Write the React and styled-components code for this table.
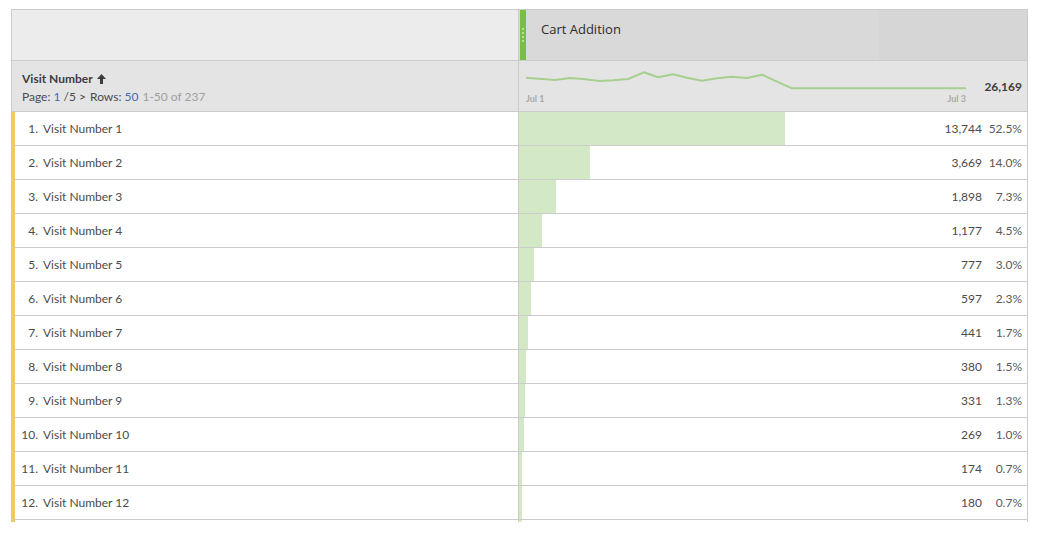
import React from "react";
import styled, { createGlobalStyle } from "styled-components";

const GlobalStyle = createGlobalStyle`
  body {
    margin: 0;
    background: #fff;
    font-family: Lato, "Open Sans", sans-serif;
    color: #4b4b4b;
  }
`;

const rows = [
  { n: 1, value: 13744, pct: "52.5%" },
  { n: 2, value: 3669, pct: "14.0%" },
  { n: 3, value: 1898, pct: "7.3%" },
  { n: 4, value: 1177, pct: "4.5%" },
  { n: 5, value: 777, pct: "3.0%" },
  { n: 6, value: 597, pct: "2.3%" },
  { n: 7, value: 441, pct: "1.7%" },
  { n: 8, value: 380, pct: "1.5%" },
  { n: 9, value: 331, pct: "1.3%" },
  { n: 10, value: 269, pct: "1.0%" },
  { n: 11, value: 174, pct: "0.7%" },
  { n: 12, value: 180, pct: "0.7%" },
];

// sparkline points, relative to the chart box
const spark = [
  [0, 7.7], [29, 10], [44, 8], [57, 9], [74, 11], [87, 10.3], [102, 9],
  [118, 2.3], [132, 7.3], [147, 4.3], [161, 7.7], [176, 10.7], [191, 8.3],
  [206, 6.7], [221, 8], [236, 4.7], [251, 11.7], [266, 18.3], [440, 18.3],
];

const Page = styled.div`
  padding: 9px 0 0 11px;
  height: 513px;
  overflow: hidden;
`;

const Table = styled.div`
  width: 1017px;
  height: 513px;
  box-sizing: border-box;
  border: 1px solid #cbcbcb;
  border-bottom: none;
  overflow: hidden;
`;

const Row = styled.div`
  display: grid;
  grid-template-columns: 507px 1fr;
  height: ${(p) => p.h}px;
  border-bottom: 1px solid #cbcbcb;
  background: ${(p) => p.bg || "#fff"};
  box-sizing: content-box;
`;

const DataRow = styled(Row)`
  margin-left: -1px;
  border-left: 4px solid #f0ca5c;
  grid-template-columns: 504px 1fr;
`;

const LeftHead = styled.div`
  background: #ececec;
  border-right: 1px solid #cbcbcb;
`;

const ColHead = styled.div`
  display: flex;
  align-items: center;
  background: linear-gradient(90deg, #d9d9d9 0 360px, #d6d6d6 360px);
`;

const Handle = styled.div`
  width: 6px;
  align-self: stretch;
  background: #79bf45;
  display: flex;
  flex-direction: column;
  align-items: center;
  justify-content: center;
  gap: 2px;
  margin: 0 15px 0 1px;

  span {
    width: 2px;
    height: 2px;
    border-radius: 50%;
    background: #c6e6ad;
  }
`;

const ColTitle = styled.div`
  font-family: "Open Sans", sans-serif;
  font-size: 13px;
  color: #2c2c2c;
  margin-top: -12px;
`;

const DimCell = styled.div`
  border-right: 1px solid #cbcbcb;
  padding: 10px 0 0 10px;
  display: flex;
  flex-direction: column;
  gap: 3px;
`;

const DimTitle = styled.div`
  font-size: 12px;
  font-weight: 700;
  color: #3d3d3d;
  display: flex;
  align-items: center;
  gap: 4px;
`;

const Pager = styled.div`
  font-size: 12px;
  color: #4b4b4b;
  display: flex;
  gap: 4px;
  align-items: center;
`;

const Link = styled.span`
  color: #4a68b4;
`;

const Muted = styled.span`
  color: #a0a0a0;
`;

const SummaryCell = styled.div`
  display: flex;
  align-items: flex-start;
`;

const Chart = styled.div`
  width: 440px;
  padding: 9px 0 0 7px;
  display: flex;
  flex-direction: column;
  gap: 1px;
`;

const Axis = styled.div`
  display: flex;
  justify-content: space-between;
  width: 440px;
  font-size: 9px;
  color: #a8a8a8;
  font-weight: 700;
`;

const Total = styled.div`
  flex: 1;
  text-align: right;
  padding: 18px 5px 0 0;
  font-size: 12px;
  font-weight: 700;
  color: #3d3d3d;
`;

const NameCell = styled.div`
  display: flex;
  align-items: center;
  font-size: 12px;
  color: #4b4b4b;
  border-right: 1px solid #cbcbcb;
`;

const Index = styled.span`
  width: 23px;
  text-align: right;
  margin-right: 5px;
`;

const MetricCell = styled.div`
  display: flex;
  align-items: center;
  font-size: 12px;
  color: #4b4b4b;
`;

const Bar = styled.div`
  align-self: stretch;
  background: #d3e8c5;
  flex-shrink: 0;
`;

const Value = styled.span`
  margin-left: auto;
`;

const Pct = styled.span`
  width: 40px;
  padding-right: 5px;
  text-align: right;
  color: #5a5a5a;
`;

function UpArrow() {
  return (
    <svg width="9" height="10" viewBox="0 0 9 10">
      <path d="M4.5 0 L9 5 H6 V10 H3 V5 H0 Z" fill="#3d3d3d" />
    </svg>
  );
}

function Sparkline() {
  const d = spark.map(([x, y], i) => `${i ? "L" : "M"}${x} ${y}`).join(" ");
  return (
    <svg width="440" height="22" viewBox="0 0 440 22">
      <path d={d} fill="none" stroke="#a7d08f" strokeWidth="2" strokeLinejoin="round" />
    </svg>
  );
}

export default function App() {
  const max = rows[0].value;
  return (
    <Page>
      <GlobalStyle />
      <Table>
        <Row h={50}>
          <LeftHead />
          <ColHead>
            <Handle>
              <span />
              <span />
              <span />
              <span />
            </Handle>
            <ColTitle>Cart Addition</ColTitle>
          </ColHead>
        </Row>
        <Row h={50} bg="#e4e4e4">
          <DimCell>
            <DimTitle>
              Visit Number <UpArrow />
            </DimTitle>
            <Pager>
              <span>
                Page: <Link>1</Link> /5 &gt;
              </span>
              <span>
                Rows: <Link>50</Link>
              </span>
              <Muted>1-50 of 237</Muted>
            </Pager>
          </DimCell>
          <SummaryCell>
            <Chart>
              <Sparkline />
              <Axis>
                <span>Jul 1</span>
                <span>Jul 3</span>
              </Axis>
            </Chart>
            <Total>26,169</Total>
          </SummaryCell>
        </Row>
        {rows.map((r) => (
          <DataRow key={r.n} h={33}>
            <NameCell>
              <Index>{r.n}.</Index>
              Visit Number {r.n}
            </NameCell>
            <MetricCell>
              <Bar style={{ width: Math.max(3, Math.round((r.value / max) * 266)) }} />
              <Value>{r.value.toLocaleString("en-US")}</Value>
              <Pct>{r.pct}</Pct>
            </MetricCell>
          </DataRow>
        ))}
        <DataRow h={33}>
          <NameCell />
          <MetricCell>
            <Bar style={{ width: 3 }} />
          </MetricCell>
        </DataRow>
      </Table>
    </Page>
  );
}
